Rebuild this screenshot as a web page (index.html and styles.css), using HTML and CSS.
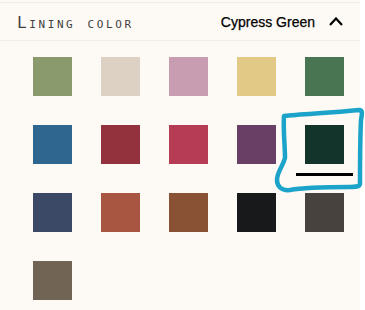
FILE: index.html
```html
<!DOCTYPE html>
<html>
<head>
<meta charset="utf-8">
<title>Lining color</title>
<link rel="stylesheet" href="styles.css">
</head>
<body>
	<div class="panel">
		<div class="option-head">
			<span class="label">Lining color</span>
			<span class="value">Cypress Green
				<svg class="chevron" width="14" height="9" viewBox="0 0 14 9"><polyline points="1,8 7,1.5 13,8" fill="none" stroke="#000" stroke-width="2.2"/></svg>
			</span>
		</div>
		<ul class="swatches">
			<li style="background:#8a9a6d"></li>
			<li style="background:#dcd1c2"></li>
			<li style="background:#c89db2"></li>
			<li style="background:#e2c985"></li>
			<li style="background:#4a7553"></li>
			<li style="background:#2e6690"></li>
			<li style="background:#93313c"></li>
			<li style="background:#b63b54"></li>
			<li style="background:#693f65"></li>
			<li class="active" style="background:#13342b"></li>
			<li style="background:#3b4966"></li>
			<li style="background:#a85542"></li>
			<li style="background:#895234"></li>
			<li style="background:#18191b"></li>
			<li style="background:#48423e"></li>
			<li style="background:#716455"></li>
		</ul>
	</div>

	<!-- hand-drawn highlight -->
	<svg class="scribble" width="365" height="310" viewBox="0 0 365 310">
		<path d="M284,116 C300,114 330,113 359,110 C363,110 362,114 361,120 C360,140 360,165 360,184 C359,187 356,187 350,187 C330,187 305,187 290,190 C281,191 277,186 277,180 C277,172 283,166 285,158 C285,145 283,130 284,116 Z" fill="none" stroke="#1ca3c9" stroke-width="4.5" stroke-linejoin="round"/>
	</svg>
</body>
</html>
```

FILE: styles.css
```css
*{margin:0;padding:0;box-sizing:border-box;}
body{position:relative;width:365px;height:310px;background:#fff;overflow:hidden;}

.panel{width:360px;height:310px;padding-top:2px;background:#fdfaf5;}

.option-head{
	display:flex;
	align-items:center;
	justify-content:space-between;
	height:39px;
	padding:1px 17px 0;
	border-top:1px solid #f1ede6;
	border-bottom:1px solid #f1ede6;
}
.option-head .label{
	font-family:"DejaVu Sans Mono",monospace;
	font-size:16px;
	font-variant:small-caps;
	letter-spacing:2.6px;
	color:#3f3f3f;
}
.option-head .value{
	display:flex;
	align-items:center;
	gap:14px;
	font-family:"Liberation Sans",Arial,sans-serif;
	font-size:14px;
	color:#000;
	-webkit-text-stroke:.25px #000;
}
.chevron{display:block;margin-top:-1px;}

.swatches{
	list-style:none;
	display:grid;
	grid-template-columns:repeat(5,39px);
	grid-auto-rows:39px;
	gap:29px;
	padding:16px 0 0 33px;
}
.swatches li{position:relative;cursor:pointer;}
.swatches li.active::after{
	content:"";
	position:absolute;
	left:-9px;
	right:-9px;
	top:48px;
	height:3px;
	background:#000;
}

.scribble{position:absolute;left:0;top:0;pointer-events:none;}
```
